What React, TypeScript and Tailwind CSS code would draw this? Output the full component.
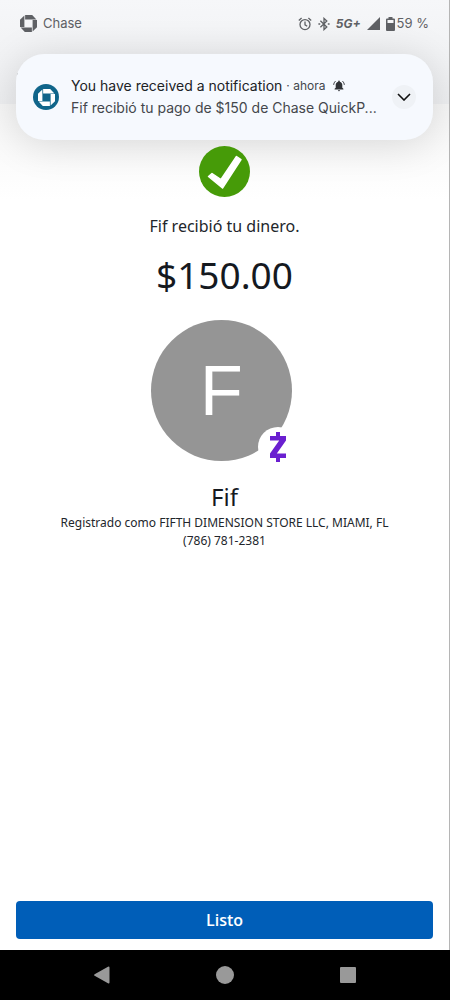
import { ReactNode } from "react";

interface ChaseMarkProps {
  className?: string;
}

function ChaseMark({ className }: ChaseMarkProps) {
  return (
    <svg viewBox="0 0 24 24" className={className} fill="currentColor" aria-hidden="true">
      <path d="M7.200 0v6.200h16L17.200 0z" />
      <path d="M24 7.200h-6.200v16l6.200-6z" />
      <path d="M16.800 24v-6.200H.8L6.800 24z" />
      <path d="M0 16.800h6.200V.8L0 6.800z" />
    </svg>
  );
}

function AlarmIcon() {
  return (
    <svg viewBox="0 0 14 14" className="size-3.5" fill="none" stroke="currentColor" strokeWidth="1.3" aria-hidden="true">
      <circle cx="7" cy="7.600" r="5" />
      <path d="M7 4.600v3.200l2.200 1.400M.8 3.400 3.600 1M13.200 3.400 10.400 1" />
    </svg>
  );
}

function BluetoothIcon() {
  return (
    <svg viewBox="0 0 12 14" className="h-3.5 w-3" fill="none" stroke="currentColor" strokeWidth="1.3" aria-hidden="true">
      <path d="m2.400 3.800 6.400 6.200L6 12.600V1.400L8.800 4 2.400 10.200" />
      <path d="M.4 7h1.800M9.800 7h1.800" strokeWidth="1.6" />
    </svg>
  );
}

function SignalIcon() {
  return (
    <svg viewBox="0 0 13 13" className="size-3.25" fill="currentColor" aria-hidden="true">
      <path d="M13 0v13H0z" />
    </svg>
  );
}

function BatteryIcon() {
  return (
    <svg viewBox="0 0 9 14" className="h-3.5 w-2.25" fill="currentColor" aria-hidden="true">
      <path
        fillRule="evenodd"
        d="M2.500 0h4v1.400H8a1 1 0 0 1 1 1V13a1 1 0 0 1-1 1H1a1 1 0 0 1-1-1V2.400a1 1 0 0 1 1-1h1.500zM1.500 2.900v3.200h6V2.900z"
      />
    </svg>
  );
}

function RingingBellIcon() {
  return (
    <svg viewBox="0 0 12 12" className="size-3" fill="currentColor" aria-hidden="true">
      <path d="M6 .6c.5 0 .8.3.8.8v.3c1.600.4 2.500 1.700 2.500 3.300v2.700l1.100 1.100v.6H1.600v-.6l1.100-1.100V5c0-1.600.9-2.900 2.500-3.300v-.3c0-.5.3-.8.8-.8zM4.900 10.200h2.200a1.100 1.100 0 0 1-2.200 0z" />
      <path d="M.7 4.800C.8 3.300 1.500 2 2.600 1.100M11.300 4.800C11.200 3.300 10.500 2 9.400 1.100" fill="none" stroke="currentColor" />
    </svg>
  );
}

function StatusBar() {
  return (
    <div className="flex h-[47px] items-center justify-between px-5 text-[#5f6165]">
      <div className="flex items-center gap-1.5">
        <ChaseMark className="size-[17px]" />
        <span className="text-[13px]">Chase</span>
      </div>
      <div className="flex items-center gap-1.5">
        <AlarmIcon />
        <BluetoothIcon />
        <span className="text-xs font-bold italic">5G+</span>
        <SignalIcon />
        <span className="flex items-center gap-0.5 text-[13px]">
          <BatteryIcon />
          59 %
        </span>
      </div>
    </div>
  );
}

function Notification() {
  return (
    <section className="absolute inset-x-4 top-[54px] flex h-[86px] items-center rounded-[28px] bg-[#f6f9fe] px-[17px] shadow-[0_4px_40px_rgba(0,0,0,0.14)]">
      <span className="flex size-[26px] shrink-0 items-center justify-center rounded-full bg-[#10658a] text-white">
        <ChaseMark className="size-[17px]" />
      </span>
      <div className="ml-3 min-w-0 flex-1">
        <p className="flex items-center text-sm leading-[22px] text-[#202226]">
          You have received a notification
          <span className="ml-1 text-xs text-[#44474c]">· ahora</span>
          <span className="ml-2 text-[#303236]">
            <RingingBellIcon />
          </span>
        </p>
        <p className="truncate text-sm leading-[22px] text-[#44474c]">Fif recibió tu pago de $150 de Chase QuickP...</p>
      </div>
      <button
        type="button"
        aria-label="Expandir"
        className="flex size-6 shrink-0 items-center justify-center rounded-full bg-[#eff2f6] text-[#111]"
      >
        <svg viewBox="0 0 14 8" className="h-2 w-3.5" fill="none" stroke="currentColor" strokeWidth="1.6" aria-hidden="true">
          <path d="m1 1 6 6 6-6" />
        </svg>
      </button>
    </section>
  );
}

function Avatar() {
  return (
    <div className="flex size-[141px] items-center justify-center rounded-full bg-[#959595] font-['Liberation_Sans',sans-serif] text-[70px] leading-none text-white">
      F
    </div>
  );
}

function ZelleBadge() {
  return (
    <span className="absolute right-0 bottom-0 flex size-10 items-center justify-center rounded-full bg-white text-[#6a1fd0]">
      <svg viewBox="0 0 16 30" className="h-[30px] w-4" fill="currentColor" aria-hidden="true">
        <path d="M6 0h4v4h6v4.500L6.800 21.500H16V26h-6v4H6v-4H0v-4.500L9.200 8.500H0V4h6z" />
      </svg>
    </span>
  );
}

function NavButton({ label, children }: { label: string; children: ReactNode }) {
  return (
    <button type="button" aria-label={label} className="flex flex-1 justify-center text-[#999]">
      <svg viewBox="0 0 18 18" className="size-[18px]" fill="currentColor" aria-hidden="true">
        {children}
      </svg>
    </button>
  );
}

export default function App() {
  return (
    <div className="flex min-h-screen flex-col bg-white font-['Noto_Sans',sans-serif] text-[#22262b]">
      <div className="relative flex flex-1 flex-col border-r border-[#b5b5b5]">
        <header className="h-26 bg-linear-to-b from-[#f6f7f9] to-[#eeeff1] font-['Inter',sans-serif]">
          <StatusBar />
          {/* tip of the back arrow, still showing beside the card's corner */}
          <svg viewBox="0 0 4 6" className="mt-6 ml-[17px] h-1.5 w-1" fill="none" stroke="#555" aria-hidden="true">
            <path d="M.5 4C.8 2.500 1.800 1.200 3.500.6" />
          </svg>
          <Notification />
        </header>

        <main className="flex flex-1 flex-col items-center bg-linear-to-b from-[#f6f6f6] to-white to-[96px] px-4 pt-[42px] text-center">
          <svg viewBox="0 0 51 51" className="relative size-[51px]" role="img" aria-label="Completado">
            <circle cx="25.500" cy="25.500" r="25.500" fill="#469b08" />
            <path
              d="m9.500 30.500 3.500-3 9 6L37.500 10.500l4.500 3L23.500 42z"
              fill="#fff"
              stroke="#fff"
              strokeWidth="1.5"
              strokeLinejoin="round"
            />
          </svg>
          <p className="mt-[17px] text-base leading-6">Fif recibió tu dinero.</p>
          <p className="mt-3 text-[37px] leading-[50px] text-[#15191f]">$150.00</p>
          <div className="relative mt-5 size-[147px]">
            <Avatar />
            <ZelleBadge />
          </div>
          <h1 className="mt-[13px] text-2xl leading-[34px] text-[#15191f]">Fif</h1>
          <p className="text-xs leading-[18px]">Registrado como FIFTH DIMENSION STORE LLC, MIAMI, FL</p>
          <p className="text-xs leading-[18px]">(786) 781-2381</p>
          <button
            type="button"
            className="mt-auto mb-[11px] h-[38px] w-full rounded bg-[#005eb8] font-['Open_Sans',sans-serif] font-semibold text-white"
          >
            Listo
          </button>
        </main>
      </div>

      <nav className="flex h-[50px] items-center bg-black px-[41px]">
        <NavButton label="Atrás">
          <path d="M15 .8a1 1 0 0 1 1.500.8v14.800a1 1 0 0 1-1.500.8L1.600 9.800a1 1 0 0 1 0-1.600z" />
        </NavButton>
        <NavButton label="Inicio">
          <circle cx="9" cy="9" r="9" />
        </NavButton>
        <NavButton label="Recientes">
          <rect x="1" y="1" width="16" height="16" rx="1" />
        </NavButton>
      </nav>
    </div>
  );
}
